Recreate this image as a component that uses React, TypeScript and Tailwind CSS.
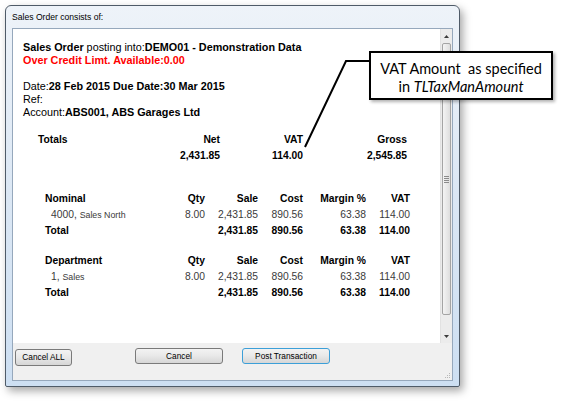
type Row = { code: string; name: string; qty: string; sale: string; cost: string; margin: string; vat: string };

const nominalRows: Row[] = [
  { code: "4000,", name: "Sales North", qty: "8.00", sale: "2,431.85", cost: "890.56", margin: "63.38", vat: "114.00" },
];

const departmentRows: Row[] = [
  { code: "1,", name: "Sales", qty: "8.00", sale: "2,431.85", cost: "890.56", margin: "63.38", vat: "114.00" },
];

const cols = "grid grid-cols-[125px_35px_53px_45px_63px_44px] ml-[22px] leading-[16px] text-[10.3px]";

function Breakdown({ title, rows }: { title: string; rows: Row[] }) {
  return (
    <div className={cols}>
      <div className="font-bold">{title}</div>
      <div className="font-bold text-right">Qty</div>
      <div className="font-bold text-right">Sale</div>
      <div className="font-bold text-right">Cost</div>
      <div className="font-bold text-right">Margin %</div>
      <div className="font-bold text-right">VAT</div>
      {rows.map((r) => (
        <div key={r.code} className="contents text-[#3a3a3a]">
          <div className="pl-[6px] whitespace-nowrap">
            {r.code} <span className="text-[8.8px]">{r.name}</span>
          </div>
          <div className="text-right">{r.qty}</div>
          <div className="text-right">{r.sale}</div>
          <div className="text-right">{r.cost}</div>
          <div className="text-right">{r.margin}</div>
          <div className="text-right">{r.vat}</div>
        </div>
      ))}
      <div className="font-bold">Total</div>
      <div />
      <div className="font-bold text-right">2,431.85</div>
      <div className="font-bold text-right">890.56</div>
      <div className="font-bold text-right">63.38</div>
      <div className="font-bold text-right">114.00</div>
    </div>
  );
}

function ScrollBar() {
  return (
    <div className="w-[12px] flex flex-col bg-[#ececec] border-l border-[#e2e2e2]">
      <div className="h-[14px] flex items-center justify-center">
        <svg width="5" height="3" viewBox="0 0 5 3">
          <path d="M0 3 L2.5 0 L5 3 Z" fill="#3c3c3c" />
        </svg>
      </div>
      <div className="h-[272px] mx-[1px] rounded-[2px] border border-[#a4a4a4] bg-gradient-to-r from-[#f4f4f4] to-[#dedede] flex items-center justify-center">
        <div className="flex flex-col gap-[1px]">
          <div className="w-[5px] h-[1px] bg-[#8a8a8a]" />
          <div className="w-[5px] h-[1px] bg-[#8a8a8a]" />
          <div className="w-[5px] h-[1px] bg-[#8a8a8a]" />
          <div className="w-[5px] h-[1px] bg-[#8a8a8a]" />
        </div>
      </div>
      <div className="flex-1" />
      <div className="h-[14px] flex items-center justify-center">
        <svg width="5" height="3" viewBox="0 0 5 3">
          <path d="M0 0 L5 0 L2.5 3 Z" fill="#3c3c3c" />
        </svg>
      </div>
    </div>
  );
}

function Button({ label, className }: { label: string; className: string }) {
  return (
    <div
      className={`flex items-center justify-center rounded-[3px] border bg-gradient-to-b from-[#f3f3f3] via-[#e8e8e8] to-[#d6d6d6] text-[8.3px] text-black ${className}`}
    >
      {label}
    </div>
  );
}

export default function App() {
  return (
    <div
      className="relative w-[565px] h-[401px] bg-white overflow-hidden pl-[5px] pt-[5px]"
      style={{ fontFamily: '"Liberation Sans", Arial, sans-serif' }}
    >
      {/* dialog window */}
      <div className="w-[455px] h-[382px] flex flex-col rounded-t-[6px] rounded-b-[2px] border border-[#4f5b68] bg-gradient-to-b from-[#eef3f9] via-[#dbe7f4] to-[#cddff2] shadow-[3px_4px_8px_rgba(0,0,0,0.35)]">
        <div className="h-[22px] flex items-center px-[6px] text-[8.6px] text-black">Sales Order consists of:</div>

        <div className="mx-[6px] h-[353px] flex flex-col border border-[#96a8bc]">
          <div className="h-[314px] flex bg-white">
            <div className="flex-1 pl-[10px] pt-[12px] text-black">
              <div className="text-[10.8px] leading-[13px]">
                <div>
                  <b>Sales Order</b> posting into:<b>DEMO01 - Demonstration Data</b>
                </div>
                <div className="font-bold text-[#ff0000]">Over Credit Limt. Available:0.00</div>
                <div>&nbsp;</div>
                <div>
                  Date:<b>28 Feb 2015 Due Date:30 Mar 2015</b>
                </div>
                <div>Ref:</div>
                <div>
                  Account:<b>ABS001, ABS Garages Ltd</b>
                </div>
              </div>

              <div className="mt-[13px] ml-[15px] grid grid-cols-[120px_62px_83px_104px] text-[10.3px] leading-[16px] font-bold">
                <div>Totals</div>
                <div className="text-right">Net</div>
                <div className="text-right">VAT</div>
                <div className="text-right">Gross</div>
                <div />
                <div className="text-right">2,431.85</div>
                <div className="text-right">114.00</div>
                <div className="text-right">2,545.85</div>
              </div>

              <div className="mt-[27px]">
                <Breakdown title="Nominal" rows={nominalRows} />
              </div>
              <div className="mt-[14px]">
                <Breakdown title="Department" rows={departmentRows} />
              </div>
            </div>
            <ScrollBar />
          </div>

          <div className="flex-1 bg-[#f0f0f0] flex items-start pl-[2px] pt-[5px] relative">
            <Button label="Cancel ALL" className="mt-[1px] w-[57px] h-[17px] border-[#7a7a7a]" />
            <Button label="Cancel" className="ml-[63px] w-[88px] h-[16px] border-[#7a7a7a]" />
            <Button label="Post Transaction" className="ml-[19px] w-[88px] h-[16px] border-[#3c9fd8]" />
            {/* size grip */}
            <svg className="absolute right-[1px] bottom-[1px]" width="7" height="7" viewBox="0 0 7 7">
              <g fill="#b8b8b8">
                <rect x="5" y="1" width="1" height="1" />
                <rect x="3" y="3" width="1" height="1" />
                <rect x="5" y="3" width="1" height="1" />
                <rect x="1" y="5" width="1" height="1" />
                <rect x="3" y="5" width="1" height="1" />
                <rect x="5" y="5" width="1" height="1" />
              </g>
            </svg>
          </div>
        </div>
      </div>

      {/* callout */}
      <svg className="absolute left-0 top-0" width="565" height="401">
        <polyline points="369,61 346,61 305,147" fill="none" stroke="#000" strokeWidth="2" />
      </svg>
      <div
        className="absolute left-[369px] top-[51px] w-[184px] h-[49px] border-2 border-black bg-white pt-[7px] text-center text-[14.5px] leading-[18px] text-black shadow-[2px_2px_3px_rgba(0,0,0,0.3)]"
        style={{ fontFamily: 'Lato, "Open Sans", sans-serif' }}
      >
        <div className="whitespace-pre">VAT Amount  as specified</div>
        <div>
          in <i>TLTaxManAmount</i>
        </div>
      </div>
    </div>
  );
}
